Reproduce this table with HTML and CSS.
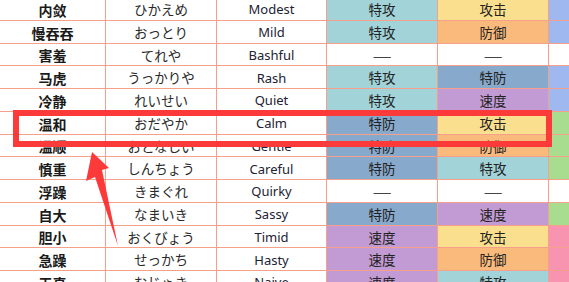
FILE: index.html
```html
<!DOCTYPE html>
<html lang="zh">
<head>
<meta charset="utf-8">
<link rel="stylesheet" href="styles.css">
</head>
<body>
<div class="stage">
  <div class="grid">
    <div class="c name">内敛</div><div class="c jp">ひかえめ</div><div class="c en">Modest</div><div class="c t-spa">特攻</div><div class="c t-atk">攻击</div><div class="c x-blue"></div>
    <div class="c name">慢吞吞</div><div class="c jp">おっとり</div><div class="c en">Mild</div><div class="c t-spa">特攻</div><div class="c t-def">防御</div><div class="c x-blue"></div>
    <div class="c name">害羞</div><div class="c jp">てれや</div><div class="c en">Bashful</div><div class="c"><span class="dash">—</span></div><div class="c"><span class="dash">—</span></div><div class="c"></div>
    <div class="c name">马虎</div><div class="c jp">うっかりや</div><div class="c en">Rash</div><div class="c t-spa">特攻</div><div class="c t-spd">特防</div><div class="c x-blue"></div>
    <div class="c name">冷静</div><div class="c jp">れいせい</div><div class="c en">Quiet</div><div class="c t-spa">特攻</div><div class="c t-spe">速度</div><div class="c x-blue"></div>
    <div class="c name">温和</div><div class="c jp">おだやか</div><div class="c en">Calm</div><div class="c t-spd">特防</div><div class="c t-atk">攻击</div><div class="c x-green"></div>
    <div class="c name">温顺</div><div class="c jp">おとなしい</div><div class="c en">Gentle</div><div class="c t-spd">特防</div><div class="c t-def">防御</div><div class="c x-green"></div>
    <div class="c name">慎重</div><div class="c jp">しんちょう</div><div class="c en">Careful</div><div class="c t-spd">特防</div><div class="c t-spa">特攻</div><div class="c x-green"></div>
    <div class="c name">浮躁</div><div class="c jp">きまぐれ</div><div class="c en">Quirky</div><div class="c"><span class="dash">—</span></div><div class="c"><span class="dash">—</span></div><div class="c"></div>
    <div class="c name">自大</div><div class="c jp">なまいき</div><div class="c en">Sassy</div><div class="c t-spd">特防</div><div class="c t-spe">速度</div><div class="c x-green"></div>
    <div class="c name">胆小</div><div class="c jp">おくびょう</div><div class="c en">Timid</div><div class="c t-spe">速度</div><div class="c t-atk">攻击</div><div class="c x-pink"></div>
    <div class="c name">急躁</div><div class="c jp">せっかち</div><div class="c en">Hasty</div><div class="c t-spe">速度</div><div class="c t-def">防御</div><div class="c x-pink"></div>
    <div class="c name">天真</div><div class="c jp">むじゃき</div><div class="c en">Naive</div><div class="c t-spe">速度</div><div class="c t-spa">特攻</div><div class="c x-pink"></div>
  </div>
  <div class="mark"></div>
  <svg class="arrow" width="569" height="282" viewBox="0 0 569 282">
    <polygon points="92,152 109,168 102,170 118,246 95,177 86,181" fill="#fc3a3a"/>
  </svg>
</div>
</body>
</html>
```
FILE: styles.css
```css
html, body {
  margin: 0;
  padding: 0;
  background: #ffffff;
}
body {
  width: 569px;
  height: 282px;
  overflow: hidden;
  font-family: "Noto Sans CJK SC", "Noto Sans", sans-serif;
  color: #222222;
}
.stage {
  position: relative;
  width: 569px;
  height: 282px;
  overflow: hidden;
}
.grid {
  display: grid;
  grid-template-columns: 106px 111px 110px 111px 111px 60px;
  grid-auto-rows: 22.75px;
  margin-top: -2px;
}
.c {
  box-sizing: border-box;
  border-right: 1px solid #f4a08a;
  border-bottom: 1px solid #f4a08a;
  display: flex;
  align-items: center;
  justify-content: center;
  padding-top: 2px;
  font-size: 13.5px;
  line-height: 1;
  white-space: nowrap;
}
.name {
  font-weight: 700;
  font-size: 14px;
  color: #1a1a1a;
}
.jp {
  font-size: 13.5px;
  color: #2a2a2a;
}
.en {
  font-family: "Noto Sans", "Noto Sans CJK SC", sans-serif;
  font-size: 13px;
  color: #222233;
}
.dash {
  display: inline-block;
  transform: scaleX(1.6);
  color: #111111;
}
.t-spa { background: #a1d3d9; }
.t-atk { background: #f9df8e; }
.t-def { background: #f9ba7b; }
.t-spd { background: #87a9cb; }
.t-spe { background: #c39bd4; }
.x-blue { background: #9fb8ef; }
.x-green { background: #a8dc8f; }
.x-pink { background: #f893b0; }
.mark {
  position: absolute;
  left: 13px;
  top: 110px;
  width: 539px;
  height: 37px;
  box-sizing: border-box;
  border: 6px solid #fc3a3a;
}
.arrow {
  position: absolute;
  left: 0;
  top: 0;
}
```
